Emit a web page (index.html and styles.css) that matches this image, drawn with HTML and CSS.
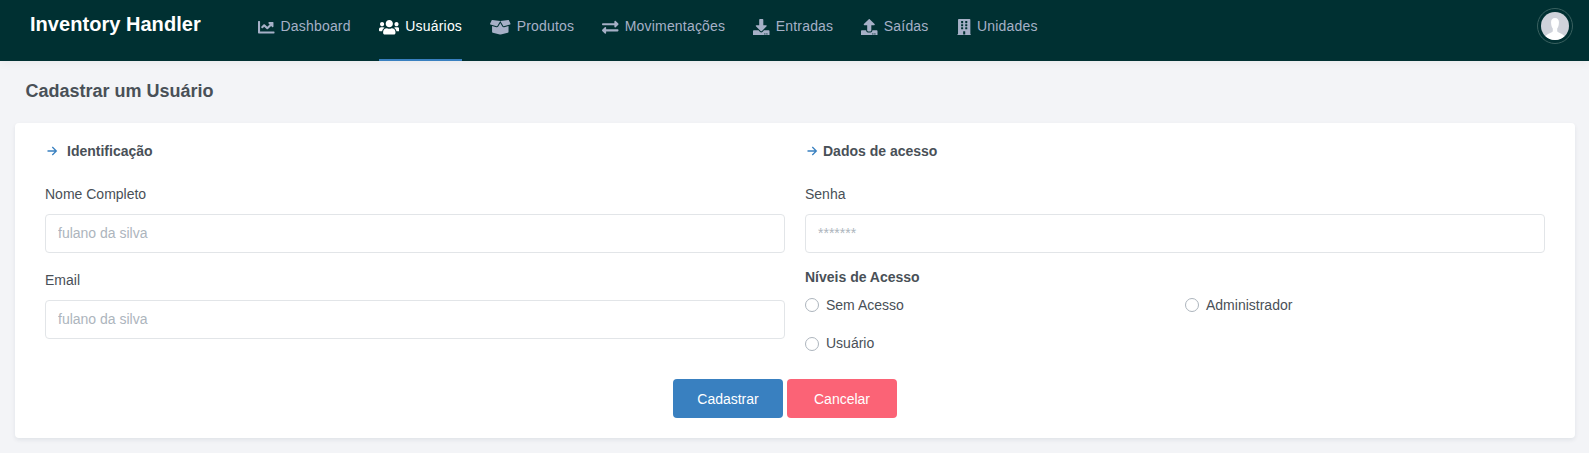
FILE: index.html
```html
<!DOCTYPE html>
<html lang="pt-BR">
<head>
<meta charset="utf-8">
<title>Inventory Handler</title>
<link rel="stylesheet" href="styles.css">
</head>
<body>
<header class="topbar">
  <a class="brand">Inventory Handler</a>
  <nav class="nav">
    <a class="nav-item"><svg class="icon" viewBox="0 0 512 512"><path d="M496 384H64V80c0-8.840-7.160-16-16-16H16C7.160 64 0 71.160 0 80v336c0 17.670 14.330 32 32 32h464c8.840 0 16-7.160 16-16v-32c0-8.840-7.160-16-16-16zM464 96H345.940c-21.380 0-32.090 25.850-16.970 40.970l32.400 32.400L288 242.750l-73.370-73.370c-12.500-12.500-32.760-12.500-45.250 0l-68.690 68.690c-6.250 6.250-6.250 16.380 0 22.630l22.620 22.620c6.250 6.250 16.380 6.250 22.630 0L192 237.250l73.370 73.370c12.500 12.500 32.760 12.500 45.250 0l96-96 32.400 32.400c15.120 15.120 40.970 4.410 40.970-16.970V112c.01-8.840-7.150-16-15.990-16z"/></svg><span>Dashboard</span></a>
    <a class="nav-item active"><svg class="icon wide" viewBox="0 0 640 512"><path d="M96 224c35.300 0 64-28.700 64-64s-28.700-64-64-64-64 28.700-64 64 28.700 64 64 64zm448 0c35.300 0 64-28.700 64-64s-28.700-64-64-64-64 28.700-64 64 28.700 64 64 64zm32 32h-64c-17.600 0-33.500 7.100-45.100 18.600 40.300 22.100 68.900 62 75.100 109.400h66c17.700 0 32-14.300 32-32v-32c0-35.300-28.700-64-64-64zm-256 0c61.900 0 112-50.100 112-112S381.900 32 320 32 208 82.100 208 144s50.100 112 112 112zm76.800 32h-8.300c-20.800 10-43.900 16-68.500 16s-47.600-6-68.500-16h-8.300C179.600 288 128 339.600 128 403.200V432c0 26.500 21.500 48 48 48h288c26.500 0 48-21.500 48-48v-28.800c0-63.600-51.600-115.200-115.200-115.200zm-223.700-13.400C161.500 263.100 145.600 256 128 256H64c-35.300 0-64 28.700-64 64v32c0 17.700 14.300 32 32 32h65.900c6.300-47.400 34.900-87.300 75.200-109.400z"/></svg><span>Usuários</span></a>
    <a class="nav-item"><svg class="icon wide" viewBox="0 0 640 512"><path d="M425.700 256c-16.900 0-32.800-9-41.400-23.400L320 126l-64.200 106.600c-8.700 14.500-24.600 23.500-41.500 23.500-4.500 0-9-.6-13.300-1.900L64 215v178c0 14.700 10 27.500 24.200 31l216.200 54.100c10.200 2.500 20.900 2.500 31 0L551.800 424c14.200-3.600 24.200-16.400 24.200-31V215l-137 39.100c-4.300 1.300-8.800 1.900-13.300 1.900zm212.600-112.200L586.800 41c-3.100-6.200-9.800-9.800-16.700-8.900L320 64l91.700 152.100c3.800 6.300 11.400 9.300 18.500 7.300l197.900-56.500c9.900-2.900 14.700-13.900 10.200-23.100zM53.200 41L1.700 143.800c-4.600 9.200.3 20.200 10.100 23l197.900 56.500c7.100 2 14.700-1 18.500-7.300L320 64 69.800 32.100c-6.900-.8-13.500 2.700-16.600 8.900z"/></svg><span>Produtos</span></a>
    <a class="nav-item"><svg class="icon" viewBox="0 0 512 512"><path d="M0 168v-16c0-13.255 10.745-24 24-24h360V80c0-21.367 25.899-32.042 40.971-16.971l80 80c9.372 9.373 9.372 24.569 0 33.941l-80 80C409.956 271.982 384 261.456 384 240v-48H24c-13.255 0-24-10.745-24-24zm488 152H128v-48c0-21.314-25.862-32.080-40.971-16.971l-80 80c-9.372 9.373-9.372 24.569 0 33.941l80 80C102.057 463.997 128 453.437 128 432v-48h360c13.255 0 24-10.745 24-24v-16c0-13.255-10.745-24-24-24z"/></svg><span>Movimentações</span></a>
    <a class="nav-item"><svg class="icon" viewBox="0 0 512 512"><path d="M216 0h80c13.300 0 24 10.700 24 24v168h87.700c17.800 0 26.700 21.500 14.100 34.100L269.700 378.300c-7.500 7.500-19.800 7.500-27.300 0L90.100 226.100c-12.600-12.600-3.700-34.100 14.100-34.100H192V24c0-13.300 10.700-24 24-24zm296 376v112c0 13.300-10.700 24-24 24H24c-13.300 0-24-10.700-24-24V376c0-13.300 10.700-24 24-24h146.700l49 49c20.100 20.100 52.500 20.100 72.600 0l49-49H488c13.300 0 24 10.700 24 24zm-124 88c0-11-9-20-20-20s-20 9-20 20 9 20 20 20 20-9 20-20zm64 0c0-11-9-20-20-20s-20 9-20 20 9 20 20 20 20-9 20-20z"/></svg><span>Entradas</span></a>
    <a class="nav-item"><svg class="icon" viewBox="0 0 512 512"><path d="M296 384h-80c-13.300 0-24-10.700-24-24V192h-87.700c-17.800 0-26.700-21.500-14.100-34.100L242.300 5.700c7.500-7.500 19.800-7.500 27.300 0l152.200 152.200c12.600 12.600 3.700 34.100-14.100 34.100H320v168c0 13.300-10.700 24-24 24zm216-8v112c0 13.300-10.700 24-24 24H24c-13.300 0-24-10.700-24-24V376c0-13.300 10.700-24 24-24h136v8c0 30.900 25.100 56 56 56h80c30.900 0 56-25.100 56-56v-8h136c13.300 0 24 10.700 24 24zm-124 88c0-11-9-20-20-20s-20 9-20 20 9 20 20 20 20-9 20-20zm64 0c0-11-9-20-20-20s-20 9-20 20 9 20 20 20 20-9 20-20z"/></svg><span>Saídas</span></a>
    <a class="nav-item"><svg class="icon narrow" viewBox="0 0 448 512"><path d="M436 480h-20V24c0-13.255-10.745-24-24-24H56C42.745 0 32 10.745 32 24v456H12c-6.627 0-12 5.373-12 12v20h448v-20c0-6.627-5.373-12-12-12zM128 76c0-6.627 5.373-12 12-12h40c6.627 0 12 5.373 12 12v40c0 6.627-5.373 12-12 12h-40c-6.627 0-12-5.373-12-12V76zm0 96c0-6.627 5.373-12 12-12h40c6.627 0 12 5.373 12 12v40c0 6.627-5.373 12-12 12h-40c-6.627 0-12-5.373-12-12v-40zm52 148h-40c-6.627 0-12-5.373-12-12v-40c0-6.627 5.373-12 12-12h40c6.627 0 12 5.373 12 12v40c0 6.627-5.373 12-12 12zm76 160h-64v-84c0-6.627 5.373-12 12-12h40c6.627 0 12 5.373 12 12v84zm64-172c0 6.627-5.373 12-12 12h-40c-6.627 0-12-5.373-12-12v-40c0-6.627 5.373-12 12-12h40c6.627 0 12 5.373 12 12v40zm0-96c0 6.627-5.373 12-12 12h-40c-6.627 0-12-5.373-12-12v-40c0-6.627 5.373-12 12-12h40c6.627 0 12 5.373 12 12v40zm0-96c0 6.627-5.373 12-12 12h-40c-6.627 0-12-5.373-12-12V76c0-6.627 5.373-12 12-12h40c6.627 0 12 5.373 12 12v40z"/></svg><span>Unidades</span></a>
  </nav>
  <div class="avatar"><svg class="avatar-pic" viewBox="0 0 28 28"><circle cx="14" cy="14" r="14" fill="#cfd2da"/><path fill="#fff" d="M14 6c-3 0-4.200 2.200-3.900 5 .1 2.800.7 4.300 1.700 5.600v2.600c-.5 1.500-5.300 2-7.300 5.100A14 14 0 0 0 14 28a14 14 0 0 0 9.500-3.700c-2-3.100-6.800-3.600-7.300-5.100v-2.600c1-1.300 1.600-2.800 1.700-5.600.3-2.800-.9-5-3.900-5z"/></svg></div>
</header>
<main class="page">
  <h1 class="page-title">Cadastrar um Usuário</h1>
  <form class="card">
    <div class="columns">
      <section class="column">
        <h2 class="section-title"><svg class="arrow" viewBox="0 0 14 14"><path d="M2.500 7h8.800M7.300 3l4 4-4 4"/></svg><span class="spaced">Identificação</span></h2>
        <label class="label" for="nome">Nome Completo</label>
        <input class="field" id="nome" type="text" placeholder="fulano da silva">
        <label class="label" for="email">Email</label>
        <input class="field" id="email" type="text" placeholder="fulano da silva">
      </section>
      <section class="column">
        <h2 class="section-title"><svg class="arrow" viewBox="0 0 14 14"><path d="M2.500 7h8.800M7.300 3l4 4-4 4"/></svg><span>Dados de acesso</span></h2>
        <label class="label" for="senha">Senha</label>
        <input class="field" id="senha" type="password" placeholder="*******">
        <h3 class="levels-title">Níveis de Acesso</h3>
        <div class="levels">
          <label class="option"><input class="radio" type="radio" name="nivel">Sem Acesso</label>
          <label class="option"><input class="radio" type="radio" name="nivel">Administrador</label>
          <label class="option last"><input class="radio" type="radio" name="nivel">Usuário</label>
        </div>
      </section>
    </div>
    <div class="actions">
      <button class="button primary" type="button">Cadastrar</button>
      <button class="button danger" type="button">Cancelar</button>
    </div>
  </form>
</main>
</body>
</html>
```
FILE: styles.css
```css
* { box-sizing: border-box; }
body {
  margin: 0;
  min-height: 453px;
  background: #f3f4f7;
  color: #495057;
  font: 14px/21px "Liberation Sans", Arial, sans-serif;
}
.topbar {
  display: flex;
  height: 61px;
  padding: 0 16px 0 30px;
  background: #003032;
  box-shadow: 0 1px 10px rgba(30, 32, 37, 0.06);
}
.brand {
  width: 228px;
  padding-top: 12px;
  color: #fff;
  font-size: 20px;
  font-weight: 700;
  line-height: 24px;
  letter-spacing: 0.04px;
}
.nav { display: flex; gap: 28px; }
.nav-item {
  display: flex;
  gap: 6px;
  height: 61px;
  padding-top: 16px;
  color: #a6b0c7;
  letter-spacing: 0.19px;
  border-bottom: 2px solid transparent;
}
.nav-item.active { color: #fff; border-bottom-color: #3980c0; }
.icon { width: 16.5px; height: 16.5px; margin-top: 2.5px; fill: #a6b0c7; }
.icon.wide { width: 20.6px; }
.icon.narrow { width: 14.4px; }
.active .icon { fill: #fff; }
.avatar {
  width: 36px;
  height: 36px;
  margin: 8px 0 0 auto;
  padding: 3px;
  border: 1px solid #39605f;
  border-radius: 50%;
}
.avatar-pic { display: block; width: 28px; height: 28px; }
.page { padding: 0 14px 0 15px; }
.page-title {
  margin: 0;
  padding: 18px 0 20px 10.5px;
  font-size: 18px;
  line-height: 24px;
}
.card {
  height: 315px;
  padding: 18px 30px 0;
  background: #fff;
  border-radius: 4px;
  box-shadow: 0 2px 4px rgba(15, 34, 58, 0.08);
}
.columns { display: grid; grid-template-columns: 1fr 1fr; gap: 20px; height: 238px; }
.section-title {
  display: flex;
  align-items: center;
  gap: 4px;
  margin: 0 0 22px;
  font-size: 14px;
  line-height: 21px;
}
.spaced { padding-left: 4px; }
.arrow {
  width: 14px;
  height: 14px;
  margin-bottom: 2px;
  fill: none;
  stroke: #3980c0;
  stroke-width: 1.3;
}
.label { display: block; margin-bottom: 9px; line-height: 21px; }
.field {
  display: block;
  width: 100%;
  height: 39px;
  margin-bottom: 17px;
  padding: 0 12px 2px;
  background: #fff;
  border: 1px solid #e2e5e8;
  border-radius: 4px;
  color: #495057;
  font: inherit;
}
.field::placeholder { color: #adb5bd; opacity: 1; }
.levels-title { margin: -3px 0 7px; font-size: 14px; line-height: 21px; }
.levels { display: grid; grid-template-columns: 380px 1fr; row-gap: 17px; }
.option { display: flex; align-items: center; gap: 7px; }
.radio {
  width: 14px;
  height: 14px;
  margin: 0 0 2px;
  appearance: none;
  background: #fff;
  border: 1px solid #adb5bd;
  border-radius: 50%;
}
.last .radio { margin-bottom: 0; }
.actions { display: flex; gap: 4px; padding-left: 628px; }
.button {
  width: 110px;
  height: 39px;
  padding: 2px 0 0;
  border: 0;
  border-radius: 4px;
  color: #fff;
  font: inherit;
}
.primary { background: #3980c0; }
.danger { background: #fb6376; }
```
